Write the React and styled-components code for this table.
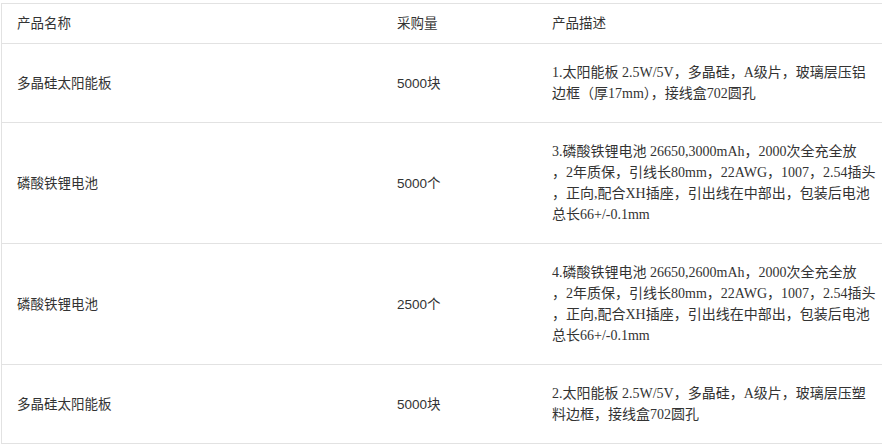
import React from 'react';
import styled, { createGlobalStyle } from 'styled-components';

const products = [
  {
    name: '多晶硅太阳能板',
    qty: '5000块',
    desc: ['1.太阳能板 2.5W/5V，多晶硅，A级片，玻璃层压铝', '边框（厚17mm），接线盒702圆孔'],
  },
  {
    name: '磷酸铁锂电池',
    qty: '5000个',
    desc: [
      '3.磷酸铁锂电池 26650,3000mAh，2000次全充全放',
      '，2年质保，引线长80mm，22AWG，1007，2.54插头',
      '，正向,配合XH插座，引出线在中部出，包装后电池',
      '总长66+/-0.1mm',
    ],
  },
  {
    name: '磷酸铁锂电池',
    qty: '2500个',
    desc: [
      '4.磷酸铁锂电池 26650,2600mAh，2000次全充全放',
      '，2年质保，引线长80mm，22AWG，1007，2.54插头',
      '，正向,配合XH插座，引出线在中部出，包装后电池',
      '总长66+/-0.1mm',
    ],
  },
  {
    name: '多晶硅太阳能板',
    qty: '5000块',
    desc: ['2.太阳能板 2.5W/5V，多晶硅，A级片，玻璃层压塑', '料边框，接线盒702圆孔'],
  },
];

const App = () => {
  return (
    <>
      <GlobalStyle />
      <PageContainer>
        <ProductTable>
          <colgroup>
            <col style={{ width: 380 }} />
            <col style={{ width: 155 }} />
            <col />
          </colgroup>
          <thead>
            <tr>
              <HeadCell>产品名称</HeadCell>
              <HeadCell>采购量</HeadCell>
              <HeadCell>产品描述</HeadCell>
            </tr>
          </thead>
          <tbody>
            {products.map((p, i) => (
              <tr key={i}>
                <Cell>{p.name}</Cell>
                <Cell>{p.qty}</Cell>
                <Cell desc>
                  {p.desc.map((line, j) => (
                    <DescLine key={j}>{line}</DescLine>
                  ))}
                </Cell>
              </tr>
            ))}
          </tbody>
        </ProductTable>
      </PageContainer>
    </>
  );
};

const GlobalStyle = createGlobalStyle`
  body {
    margin: 0;
    background: #fff;
    overflow: hidden;
  }
`;

const PageContainer = styled.div`
  padding: 3px 0 0 1px;
`;

const ProductTable = styled.table`
  width: 920px;
  table-layout: fixed;
  border-collapse: separate;
  border-spacing: 0;
  border-top: 1px solid #e2e2e2;
  border-left: 1px solid #e2e2e2;
  color: #333;
  font-family: 'Liberation Sans', 'Noto Sans CJK SC', sans-serif;
  font-size: 13.5px;
`;

const HeadCell = styled.th`
  text-align: left;
  font-weight: normal;
  line-height: 21px;
  padding: 9px 15px;
  border-bottom: 1px solid #e2e2e2;
  white-space: nowrap;
`;

const Cell = styled.td`
  padding: 18px 15px;
  line-height: 21px;
  vertical-align: middle;
  border-bottom: 1px solid #e2e2e2;
  white-space: nowrap;
  font-family: ${props => props.desc
    ? "'Liberation Serif', 'Noto Sans CJK SC', serif"
    : "'Liberation Sans', 'Noto Sans CJK SC', sans-serif"};
  font-size: ${props => props.desc ? '14px' : '13.5px'};
`;

const DescLine = styled.div`
  white-space: nowrap;
`;

export default App;
